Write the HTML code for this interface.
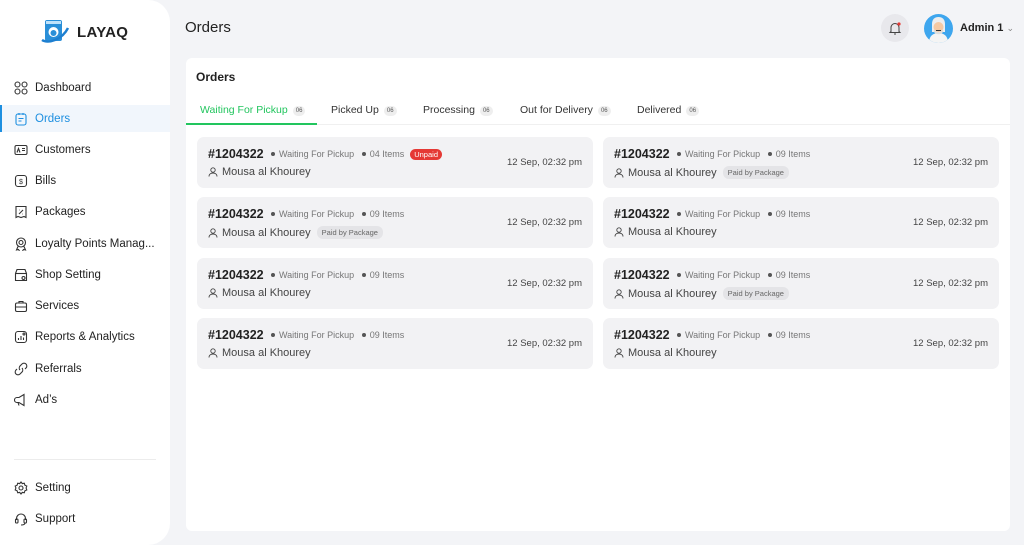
<!DOCTYPE html><html><head><style>
*{margin:0;padding:0;box-sizing:border-box}
body{width:1024px;height:545px;background:#f3f4f7;font-family:"Liberation Sans",sans-serif;color:#222;position:relative;overflow:hidden}
.sb{position:absolute;left:0;top:0;width:170px;height:545px;background:#fff;border-radius:0 22px 22px 0}
.logo{position:absolute;left:40px;top:18px;display:flex;align-items:center}
.logo span{font-size:15px;font-weight:bold;color:#222;margin-left:7px;letter-spacing:.3px}
.nav{position:absolute;left:0;width:170px;height:27px;display:flex;align-items:center;font-size:11.5px;color:#222}
.nav svg{position:absolute;left:14px;width:14px;height:14px}
.nav span{position:absolute;left:35px}
.nav.act{background:#f1f6fc;color:#1d8fe0}
.nav.act:before{content:"";position:absolute;left:0;top:0;width:2px;height:27px;background:#1d8fe0}
.hr{position:absolute;left:14px;top:459px;width:142px;height:1px;background:#ececec}
h1{position:absolute;left:185px;top:19px;font-size:15px;font-weight:normal;color:#222}
.bell{position:absolute;left:881px;top:14px;width:28px;height:28px;border-radius:50%;background:#e8e8ec}
.av{position:absolute;left:924px;top:14px;width:29px;height:29px;border-radius:50%;background:#3ea6ee;overflow:hidden}
.adm{position:absolute;left:960px;top:22px;font-size:11px;font-weight:bold}
.main{position:absolute;left:186px;top:58px;width:824px;height:473px;background:#fff;border-radius:6px}
.main h2{position:absolute;left:10px;top:12px;font-size:12px;font-weight:bold}
.tabs{position:absolute;left:0;top:40px;width:824px;height:27px;border-bottom:1px solid #f0f0f0}
.tab{position:absolute;top:6px;font-size:10.5px;color:#333}
.tab b{display:inline-block;font-weight:normal;font-size:6px;background:#eee;color:#555;border-radius:6px;padding:2px 3px;margin-left:5px;vertical-align:1px}
.tab.a{color:#22c55e}
.ul{position:absolute;left:0;top:25px;width:131px;height:2px;background:#22c55e}
.card{position:absolute;width:396px;height:51px;background:#f2f2f4;border-radius:7px}
.id{position:absolute;left:11px;top:10px;font-size:12.5px;font-weight:bold;color:#222}
.meta{position:absolute;left:74px;top:12px;font-size:9px;color:#777;white-space:nowrap}
.meta i{display:inline-block;width:4px;height:4px;border-radius:50%;background:#555;margin:0 4px 1px 0;vertical-align:middle}
.un{display:inline-block;background:#e53935;color:#fff;font-size:7.5px;border-radius:6px;padding:1px 4px;margin-left:6px}
.nm{position:absolute;left:11px;top:29px;font-size:11px;color:#444;display:flex;align-items:center}
.nm svg{margin-right:4px}
.pk{display:inline-block;background:#e4e4e7;color:#666;font-size:7.5px;border-radius:6px;padding:2px 5px;margin-left:6px}
.dt{position:absolute;right:11px;top:20px;font-size:9.5px;color:#444}
</style></head><body>
<div class="sb">
<div class="logo"><svg width="30" height="28" viewBox="0 0 30 28"><rect x="5" y="2" width="17" height="21" rx="2" fill="#2a8fd8"/><rect x="6" y="3" width="15" height="3" fill="#bfe2fa"/><circle cx="13.5" cy="14" r="5" fill="#fff"/><circle cx="13.5" cy="15" r="3" fill="#2a8fd8"/><path d="M2 22C8 26 22 22 28 10" stroke="#1d7fd0" stroke-width="2.5" fill="none"/></svg><span>LAYAQ</span></div>
<div class="nav" style="top:74px"><svg viewBox="0 0 14 14" fill="none" stroke="#333" stroke-width="1.1"><circle cx="3.5" cy="3.5" r="2.5"/><circle cx="10.5" cy="3.5" r="2.5"/><circle cx="3.5" cy="10.5" r="2.5"/><circle cx="10.5" cy="10.5" r="2.5"/></svg><span>Dashboard</span></div>
<div class="nav act" style="top:105px"><svg viewBox="0 0 14 14" fill="none" stroke="#1d8fe0" stroke-width="1.1"><rect x="2" y="2" width="10" height="11" rx="2"/><path d="M5 1v2M9 1v2M4.5 6.5h5M4.5 9h3"/></svg><span>Orders</span></div>
<div class="nav" style="top:136px"><svg viewBox="0 0 14 14" fill="none" stroke="#333" stroke-width="1.1"><rect x="1" y="2.5" width="12" height="9" rx="1.5"/><path d="M3 9.5l1.5-4 1.5 4M8 5.5h3M8 7.5h3"/></svg><span>Customers</span></div>
<div class="nav" style="top:167px"><svg viewBox="0 0 14 14" fill="none" stroke="#333" stroke-width="1.1"><rect x="1.5" y="1.5" width="11" height="11" rx="2.5"/><text x="7" y="10" font-size="7" text-anchor="middle" fill="#333" stroke="none">$</text></svg><span>Bills</span></div>
<div class="nav" style="top:198px"><svg viewBox="0 0 14 14" fill="none" stroke="#333" stroke-width="1.1"><path d="M2 1.5h10v11l-2-1-3 1-3-1-2 1z"/><path d="M5 9l4-4M5 5h.5M8.5 9h.5"/></svg><span>Packages</span></div>
<div class="nav" style="top:230px"><svg viewBox="0 0 14 14" fill="none" stroke="#333" stroke-width="1.1"><circle cx="7" cy="5.5" r="4.5"/><circle cx="7" cy="5.5" r="2"/><path d="M4 9.5l-1.5 3.5 2-.5 1 1.5M10 9.5l1.5 3.5-2-.5-1 1.5"/></svg><span>Loyalty Points Manag...</span></div>
<div class="nav" style="top:261px"><svg viewBox="0 0 14 14" fill="none" stroke="#333" stroke-width="1.1"><path d="M1.5 5.5L3 1.5h8l1.5 4v7h-11z"/><path d="M1.5 5.5h11"/><circle cx="9.5" cy="10" r="1.5"/></svg><span>Shop Setting</span></div>
<div class="nav" style="top:292px"><svg viewBox="0 0 14 14" fill="none" stroke="#333" stroke-width="1.1"><rect x="1.5" y="4" width="11" height="8.5" rx="1.5"/><path d="M5 4V2.5h4V4M1.5 8h11"/></svg><span>Services</span></div>
<div class="nav" style="top:323px"><svg viewBox="0 0 14 14" fill="none" stroke="#333" stroke-width="1.1"><rect x="1.5" y="1.5" width="11" height="11" rx="2.5"/><path d="M4.5 10V8M7 10V6M9.5 10V7.5"/><circle cx="10" cy="4" r="1"/></svg><span>Reports &amp; Analytics</span></div>
<div class="nav" style="top:355px"><svg viewBox="0 0 14 14" fill="none" stroke="#333" stroke-width="1.1"><path d="M6 8a3 3 0 0 1 0-4l2-2a2.8 2.8 0 0 1 4 4l-1 1M8 6a3 3 0 0 1 0 4l-2 2a2.8 2.8 0 0 1-4-4l1-1"/></svg><span>Referrals</span></div>
<div class="nav" style="top:386px"><svg viewBox="0 0 14 14" fill="none" stroke="#333" stroke-width="1.1"><path d="M3 4.5h2l5-3v11l-5-3H3a2 2 0 0 1 0-5z"/><path d="M4 9.5l1 3"/></svg><span>Ad’s</span></div>
<div class="hr"></div>
<div class="nav" style="top:474px"><svg viewBox="0 0 14 14" fill="none" stroke="#333" stroke-width="1.1"><circle cx="7" cy="7" r="2"/><path d="M7 1l1.3 1.6 2-.4.6 2 1.9.8-.7 2 .7 2-1.9.8-.6 2-2-.4L7 13l-1.3-1.6-2 .4-.6-2-1.9-.8.7-2-.7-2 1.9-.8.6-2 2 .4z"/></svg><span>Setting</span></div>
<div class="nav" style="top:505px"><svg viewBox="0 0 14 14" fill="none" stroke="#333" stroke-width="1.1"><path d="M2.5 8V6.5a4.5 4.5 0 0 1 9 0V8"/><rect x="1.5" y="7" width="2.5" height="4" rx="1"/><rect x="10" y="7" width="2.5" height="4" rx="1"/><path d="M11 11c0 1.5-2 2-4 2"/></svg><span>Support</span></div>
</div>
<h1>Orders</h1>
<div class="bell"><svg width="28" height="28" viewBox="0 0 28 28" fill="none" stroke="#444" stroke-width="1"><path d="M10 17.5v-4a4 4 0 0 1 8 0v4l1 1H9z"/><path d="M13 20h2"/><circle cx="18" cy="10" r="1.6" fill="#e53935" stroke="none"/></svg></div>
<div class="av"><svg width="29" height="29" viewBox="0 0 29 29"><path d="M5 29c0-7 4-10 9.5-10S24 22 24 29z" fill="#f4f4f4"/><path d="M8 10c0-5 3-7 6.5-7S21 5 21 10v8H8z" fill="#eee"/><circle cx="14.5" cy="13" r="5" fill="#f5c9a3"/><path d="M10 15c1 4 8 4 9 0v3c-2 3-7 3-9 0z" fill="#ddd"/><path d="M12 16.5h5" stroke="#333"/></svg></div>
<div class="adm">Admin 1 <span style="font-weight:normal;color:#888;font-size:9px">⌄</span></div>
<div class="main">
<h2>Orders</h2>
<div class="tabs">
<div class="tab a" style="left:14px">Waiting For Pickup<b>06</b></div>
<div class="tab" style="left:145px">Picked Up<b>06</b></div>
<div class="tab" style="left:237px">Processing<b>06</b></div>
<div class="tab" style="left:334px">Out for Delivery<b>06</b></div>
<div class="tab" style="left:451px">Delivered<b>06</b></div>
<div class="ul"></div>
</div>
</div>
<div id="cards"></div>
<script>
var u='<svg width="10" height="10" viewBox="0 0 10 10" fill="none" stroke="#444" stroke-width=".9"><circle cx="5" cy="3" r="2.2"/><path d="M1 9.5c0-2.5 2-3.5 4-3.5s4 1 4 3.5"/></svg>';
var tops=[137,197,258,318],h='';
for(var r=0;r<4;r++)for(var c=0;c<2;c++){
var first=(r==0&&c==0),pk=(c==0&&r==1)||(c==1&&(r==0||r==2));
h+='<div class="card" style="left:'+(c?603:197)+'px;top:'+tops[r]+'px"><div class="id">#1204322</div><div class="meta"><i></i>Waiting For Pickup &nbsp; <i></i>'+(first?'04':'09')+' Items'+(first?'<span class="un">Unpaid</span>':'')+'</div><div class="nm">'+u+'Mousa al Khourey'+(pk?'<span class="pk">Paid by Package</span>':'')+'</div><div class="dt">12 Sep, 02:32 pm</div></div>';}
document.getElementById('cards').innerHTML=h;
</script>
</body></html>
